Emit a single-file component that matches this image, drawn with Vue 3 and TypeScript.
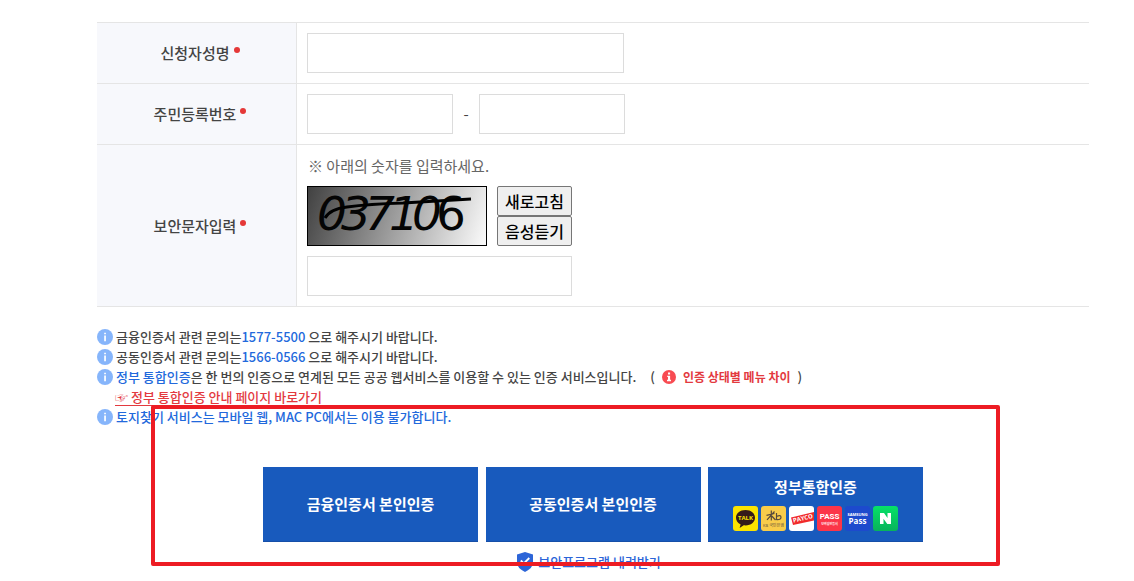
<script setup lang="ts">
import { ref } from 'vue'

interface CaptchaDigit {
  value: string
  x: number
  upright?: boolean
}

const applicant = ref('')
const residentFront = ref('')
const residentBack = ref('')
const captcha = ref('')

const digits: CaptchaDigit[] = [
  { value: '0', x: 10 },
  { value: '3', x: 34 },
  { value: '7', x: 58 },
  { value: '1', x: 82 },
  { value: '0', x: 105 },
  { value: '6', x: 129, upright: true },
]
</script>

<template>
  <main class="page">
    <form class="content" @submit.prevent>
      <table class="form-table">
        <tbody>
          <tr>
            <th scope="row"><label for="applicant">신청자성명<i class="required"></i></label></th>
            <td><input id="applicant" v-model="applicant" class="field field-name" type="text" /></td>
          </tr>
          <tr>
            <th scope="row"><label for="resident-front">주민등록번호<i class="required"></i></label></th>
            <td>
              <div class="resident">
                <input id="resident-front" v-model="residentFront" class="field field-number" type="text" maxlength="6" />
                <span class="dash">-</span>
                <input v-model="residentBack" class="field field-number" type="password" maxlength="7" aria-label="주민등록번호 뒷자리" />
              </div>
            </td>
          </tr>
          <tr>
            <th scope="row"><label for="captcha">보안문자입력<i class="required"></i></label></th>
            <td>
              <p class="hint">※ 아래의 숫자를 입력하세요.</p>
              <div class="captcha">
                <svg class="captcha-image" viewBox="0 0 180 60" role="img" aria-label="보안문자">
                  <defs>
                    <linearGradient id="captcha-bg" gradientUnits="userSpaceOnUse" x1="0" y1="0" x2="175" y2="60">
                      <stop offset="0" stop-color="#404040" />
                      <stop offset="1" stop-color="#f8f8f8" />
                    </linearGradient>
                  </defs>
                  <rect x="0.5" y="0.5" width="179" height="59" fill="url(#captcha-bg)" stroke="#000" />
                  <text
                    v-for="(digit, i) in digits"
                    :key="i"
                    :x="digit.x"
                    y="44"
                    class="digit"
                    :class="{ upright: digit.upright }"
                  >{{ digit.value }}</text>
                  <path d="M18 32 Q23 23 40 21 Q62 18 96 17 L164 13" fill="none" stroke="#000" stroke-width="3" />
                </svg>
                <div class="captcha-buttons">
                  <button type="button">새로고침</button>
                  <button type="button">음성듣기</button>
                </div>
              </div>
              <input id="captcha" v-model="captcha" class="field field-captcha" type="text" />
            </td>
          </tr>
        </tbody>
      </table>

      <ul class="notices">
        <li>
          <svg class="info" viewBox="0 0 16 16"><circle cx="8" cy="8" r="8" /><path d="M7.2 3.7h1.7v1.6H7.2zM7.2 6.6h1.7v5.6H7.2z" /></svg>
          <span>금융인증서 관련 문의는<b>1577-5500</b> 으로 해주시기 바랍니다.</span>
        </li>
        <li>
          <svg class="info" viewBox="0 0 16 16"><circle cx="8" cy="8" r="8" /><path d="M7.2 3.7h1.7v1.6H7.2zM7.2 6.6h1.7v5.6H7.2z" /></svg>
          <span>공동인증서 관련 문의는<b>1566-0566</b> 으로 해주시기 바랍니다.</span>
        </li>
        <li>
          <svg class="info" viewBox="0 0 16 16"><circle cx="8" cy="8" r="8" /><path d="M7.2 3.7h1.7v1.6H7.2zM7.2 6.6h1.7v5.6H7.2z" /></svg>
          <span><b>정부 통합인증</b>은 한 번의 인증으로 연계된 모든 공공 웹서비스를 이용할 수 있는 인증 서비스입니다.</span>
          <span class="status">
            <span>(</span>
            <a href="#status">
              <svg class="alert" viewBox="0 0 14 14"><circle cx="7" cy="7" r="7" /><path d="M6 2.6h2.1v2H6zM5.2 5.7h2.9v4h.9v1.5H5V9.700h1V7.100h-.8z" /></svg>
              인증 상태별 메뉴 차이
            </a>
            <span>)</span>
          </span>
        </li>
        <li class="guide"><a href="#guide">☞ 정부 통합인증 안내 페이지 바로가기</a></li>
        <li>
          <svg class="info" viewBox="0 0 16 16"><circle cx="8" cy="8" r="8" /><path d="M7.2 3.7h1.7v1.6H7.2zM7.2 6.6h1.7v5.6H7.2z" /></svg>
          <b>토지찾기 서비스는 모바일 웹, MAC PC에서는 이용 불가합니다.</b>
        </li>
      </ul>

      <section class="actions">
        <div class="auth-buttons">
          <button type="button">금융인증서 본인인증</button>
          <button type="button">공동인증서 본인인증</button>
          <button type="button">
            <span>정부통합인증</span>
            <span class="providers">
              <svg viewBox="0 0 25 25" aria-hidden="true">
                <rect width="25" height="25" rx="3" fill="#fbe300" />
                <path d="M12.500 4C7 4 3 7.300 3 11.700c0 2.900 1.800 5.400 4.600 6.700l-1 3.500 4.100-2.600c.6.100 1.200.1 1.800.1 5.500 0 9.500-3.300 9.500-7.700S18 4 12.500 4z" fill="#351b1a" />
                <text x="12.500" y="14" class="mark talk">TALK</text>
              </svg>
              <svg viewBox="0 0 25 25" aria-hidden="true">
                <rect width="25" height="25" rx="3" fill="#f9cc4a" />
                <path d="M5.500 9.300 13.500 7.500M10.300 4.500v10M13.500 5.500 6 13.800M10.300 9.500l4.200 4.500M15.500 7v7M15.500 10.500q4.500-2 4.500.8 0 2.700-4.500 2.300" fill="none" stroke="#594b3c" stroke-width="1.200" />
                <text x="12.500" y="21" class="mark kb">KB 국민은행</text>
              </svg>
              <svg viewBox="0 0 25 25" aria-hidden="true">
                <rect width="25" height="25" rx="3" fill="#fff" />
                <path d="M2 11.500 25 6v8.500L4 19z" fill="#f12b2b" />
                <text x="4.500" y="16.500" class="mark payco" transform="rotate(-13 4.500 16.500)">PAYCO</text>
              </svg>
              <svg viewBox="0 0 25 25" aria-hidden="true">
                <rect width="25" height="25" rx="3" fill="#fc3548" />
                <text x="12.500" y="13" class="mark pass">PASS</text>
                <text x="12.500" y="19" class="mark pass-sub">모바일인증서</text>
              </svg>
              <svg viewBox="0 0 25 25" aria-hidden="true">
                <rect width="25" height="25" rx="3" fill="#1d4acd" />
                <text x="12.500" y="9.500" class="mark samsung">SAMSUNG</text>
                <text x="12.500" y="17.500" class="mark samsung-pass">Pass</text>
              </svg>
              <svg viewBox="0 0 25 25" aria-hidden="true">
                <defs>
                  <linearGradient id="naver-bg" x1="0" y1="0" x2="0" y2="1">
                    <stop offset="0" stop-color="#06e267" />
                    <stop offset="1" stop-color="#08b35b" />
                  </linearGradient>
                </defs>
                <rect width="25" height="25" rx="3" fill="url(#naver-bg)" />
                <path d="M7 7h4l3.500 5V7H18v11h-3.700L10.500 12.700V18H7z" fill="#fff" />
              </svg>
            </span>
          </button>
        </div>
        <a class="download" href="#download">
          <svg viewBox="0 0 16 20" aria-hidden="true">
            <path d="M8 0 16 2.500V11q0 4.800-8 9-8-4.200-8-9V2.500z" fill="#2c65d8" />
            <path d="m3.800 8.500 3 3 5.500-5.500" fill="none" stroke="#fff" stroke-width="1.800" />
          </svg>
          <span>보안프로그램 내려받기</span>
        </a>
        <div class="highlight" aria-hidden="true"></div>
      </section>
    </form>
  </main>
</template>

<style>
body {
  margin: 0;
  background: #fff;
}
</style>

<style scoped>
.page {
  box-sizing: border-box;
  padding: 22px 45px 0 97px;
  color: #444;
  font-family: "Noto Sans CJK KR", "Noto Sans", sans-serif;
  font-size: 15px;
  line-height: 20px;
}

button,
input {
  font-family: inherit;
}

.form-table {
  width: 100%;
  border-collapse: separate;
  border-spacing: 0;
  border-top: 1px solid #e5e5e5;
}

th,
td {
  box-sizing: border-box;
  padding: 10px;
  border-bottom: 1px solid #e5e5e5;
}

th {
  width: 200px;
  padding-left: 17px;
  border-right: 1px solid #e5e5e5;
  background: #f7f8fc;
  font-weight: 500;
  text-align: center;
}

.required {
  display: inline-block;
  width: 6px;
  height: 6px;
  margin-left: 4px;
  border-radius: 50%;
  background: #e53838;
  vertical-align: 6px;
}

.field {
  display: block;
  box-sizing: border-box;
  height: 40px;
  margin: 0;
  padding: 0 10px;
  border: 1px solid #dcdcdc;
  border-radius: 0;
  background: #fff;
  color: #444;
  font-size: 15px;
}

.field-name {
  width: 317px;
}

.field-number {
  width: 146px;
}

.field-captcha {
  width: 265px;
}

.resident {
  display: flex;
  align-items: center;
}

.dash {
  width: 26px;
  text-align: center;
}

.hint {
  margin: 0 0 10px;
  padding-left: 1px;
  line-height: 21px;
  color: #666;
}

.captcha {
  display: flex;
  gap: 10px;
  margin-bottom: 10px;
}

.captcha-image {
  display: block;
  width: 180px;
  height: 60px;
}

.digit {
  font: italic 47px "DejaVu Sans", sans-serif;
  fill: #050505;
}

.upright {
  font-style: normal;
}

.captcha-buttons {
  display: flex;
  flex-direction: column;
}

.captcha-buttons button {
  box-sizing: border-box;
  height: 30px;
  padding: 0 7px;
  border: 1px solid #767676;
  border-radius: 2px;
  background: #efefef;
  color: #000;
  font-size: 16px;
  font-weight: 500;
  line-height: 24px;
}

.notices {
  margin: 20px 0 0;
  padding: 0;
  list-style: none;
  font-size: 13px;
  font-weight: 500;
}

.notices li {
  display: flex;
  align-items: center;
  height: 20px;
  white-space: nowrap;
}

.notices b {
  color: #2269dc;
  font-weight: 500;
}

.info {
  flex: none;
  width: 16px;
  height: 16px;
  margin-right: 3px;
}

.info circle {
  fill: #86b5fb;
}

.info path,
.alert path {
  fill: #fff;
}

.status {
  display: flex;
  align-items: center;
  gap: 7px;
  margin-left: 14px;
}

.status a {
  display: flex;
  align-items: center;
  gap: 7px;
  color: #e33a3f;
  font-size: 12px;
  font-weight: 700;
  text-decoration: none;
}

.alert {
  width: 14px;
  height: 14px;
}

.alert circle {
  fill: #f84b52;
}

.guide {
  padding-left: 18px;
}

.guide a {
  color: #e33a3f;
  text-underline-offset: 3px;
}

.actions {
  position: relative;
  display: flex;
  flex-direction: column;
  align-items: center;
  margin-top: 40px;
}

.auth-buttons {
  display: flex;
  justify-content: space-between;
  width: 660px;
}

.auth-buttons button {
  display: flex;
  flex-direction: column;
  align-items: center;
  justify-content: center;
  gap: 9px;
  box-sizing: border-box;
  width: 215px;
  height: 75px;
  padding: 0;
  border: 0;
  border-bottom: 1px solid #164fa8;
  background: #185abd;
  color: #fff;
  font-size: 15px;
  font-weight: 700;
  line-height: 20px;
}

.providers {
  display: flex;
  gap: 3px;
}

.providers svg {
  width: 25px;
  height: 25px;
}

.mark {
  font-family: "Open Sans", "Noto Sans CJK KR", sans-serif;
  font-weight: 700;
  text-anchor: middle;
  fill: #fff;
}

.talk {
  font-size: 6px;
  fill: #fbe300;
}

.kb {
  font-size: 4px;
  font-weight: 400;
  fill: #594b3c;
}

.payco {
  font-size: 6px;
  text-anchor: start;
}

.pass {
  font-family: Roboto, sans-serif;
  font-size: 8px;
}

.pass-sub {
  font-size: 3px;
}

.samsung {
  font-size: 4px;
}

.samsung-pass {
  font-size: 8px;
}

.download {
  display: flex;
  align-items: center;
  gap: 5px;
  margin-top: 10px;
  padding-right: 8px;
  color: #2c65d8;
  font-size: 13px;
  font-weight: 500;
  text-decoration: none;
}

.download svg {
  width: 16px;
  height: 20px;
}

.highlight {
  position: absolute;
  top: -62px;
  right: 89px;
  bottom: 6px;
  left: 54px;
  border: 4px solid #ed1c24;
  border-radius: 2px;
  pointer-events: none;
}
</style>
